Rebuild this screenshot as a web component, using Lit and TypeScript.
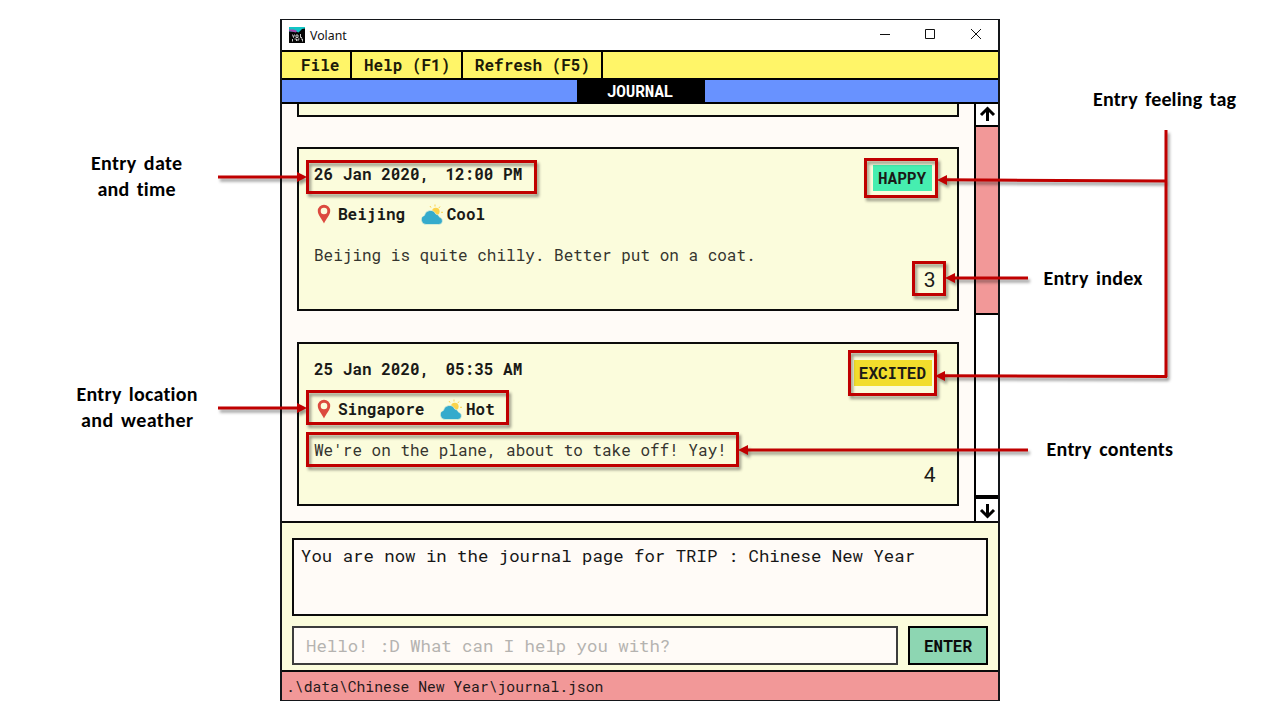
import { LitElement, html, svg, css } from "lit";
import { customElement, property } from "lit/decorators.js";

interface Entry {
  date: string;
  time: string;
  place: string;
  weather: string;
  text: string;
  feeling: string;
  index: number;
}

const ENTRIES: Entry[] = [
  { date: "26 Jan 2020,  ", time: "12:00 PM", place: "Beijing", weather: "Cool", text: "Beijing is quite chilly. Better put on a coat.", feeling: "HAPPY", index: 3 },
  { date: "25 Jan 2020,  ", time: "05:35 AM", place: "Singapore", weather: "Hot", text: "We're on the plane, about to take off! Yay!", feeling: "EXCITED", index: 4 },
];

@customElement("journal-card")
export class JournalCard extends LitElement {
  @property({ attribute: false }) entry!: Entry;

  static styles = css`
    :host { display: flex; justify-content: space-between; box-sizing: border-box; height: 164px; border: 2px solid #0b0b0b; background: #fbfcdc; padding: 13px 26px 14px 15px; color: #1a1a17; font-size: 16px; line-height: 24px; }
    .date { font-weight: 700; white-space: pre; }
    .time { margin-left: -3px; }
    .meta { display: flex; align-items: center; margin-top: 16px; font-weight: 700; }
    .pin { width: 20px; height: 22px; margin-right: 4px; }
    .cloud { width: 22px; height: 22px; margin: 0 4px 0 15.500px; }
    .text { margin-top: 17px; color: #35352f; }
    .side { display: flex; flex-direction: column; justify-content: space-between; align-items: flex-end; }
    .tag { height: 26px; line-height: 26px; margin: 3px -1px 0 0; padding: 0 6px 0 5px; font-weight: 700; }
    .HAPPY { background: #46eeb0; }
    .EXCITED { background: #f2dd2c; }
    .index { font: 21px/24px Roboto, sans-serif; margin-right: -4.500px; margin-bottom: 3px; }
  `;

  render() {
    const e = this.entry;
    return html`
      <div>
        <div class="date">${e.date}<span class="time">${e.time}</span></div>
        <div class="meta">
          <svg class="pin" viewBox="0 0 20 22"><path fill="#dc4a3f" fill-rule="evenodd" d="M10 1.700a6.200 6.200 0 0 0-6.200 6.200c0 4.300 4.100 7.600 6.200 12.700 2.100-5.100 6.200-8.400 6.200-12.700A6.200 6.200 0 0 0 10 1.700zM10 4.700a3.300 3.300 0 1 1 0 6.600 3.300 3.300 0 0 1 0-6.600z"/></svg>
          <span>${e.place}</span>
          <svg class="cloud" viewBox="0 0 22 22">
            <circle cx="14.800" cy="8.500" r="3.800" fill="#fbd34c"/>
            <path d="M14 1.500v2M9 3l1 1.600M19 3.500l-1.200 1.600M20 9.300h2" stroke="#fbd34c" stroke-width="1"/>
            <path fill="#35abcc" stroke="#fbfcdc" stroke-width=".6" d="M5 21.500a4.700 4.700 0 0 1-1.600-9.100 6 6 0 0 1 11.400-1.300 4.600 4.600 0 0 1 3.800 3.100 3.700 3.700 0 0 1-.8 7.300z"/>
          </svg>
          <span>${e.weather}</span>
        </div>
        <div class="text">${e.text}</div>
      </div>
      <div class="side">
        <div class="tag ${e.feeling}">${e.feeling}</div>
        <div class="index">${e.index}</div>
      </div>`;
  }
}

const BOXES = [
  [306, 160, 231, 34], [864, 158, 74, 40], [912, 261, 34, 35],
  [306, 390, 203, 35], [306, 432, 433, 35], [848, 350, 89, 46],
];

const LINES = [
  "M218 177H300", "M218 408H300", "M1166 130V377", "M1167 376.500L943 375.700",
  "M1166 181L945 179.800", "M1028 278H953", "M1028 450H746",
];

const HEADS = [
  "M307 177l-10-5v10z", "M307 408l-10-5v10z", "M937 180l10-5v10z",
  "M935 376l10-5v10z", "M945 278l10-5v10z", "M738 450l10-5v10z",
];

const LABELS: [string, number, number, number][] = [
  ["Entry date", 91, 170, 91], ["and time", 97.500, 196, 78],
  ["Entry location", 76.500, 401, 121], ["and weather", 81, 427, 112],
  ["Entry feeling tag", 1093, 106, 143], ["Entry index", 1043.500, 285, 99],
  ["Entry contents", 1046.500, 456, 126.500],
];

@customElement("callout-layer")
export class CalloutLayer extends LitElement {
  static styles = css`
    :host { display: block; }
    svg { display: block; }
    .marks { fill: none; stroke: #c00000; stroke-width: 3; filter: drop-shadow(2px 3px 1.500px rgba(0, 0, 0, 0.400)); }
    .heads { fill: #c00000; stroke: none; }
    .label { font: 700 20px Calibri, Carlito, Lato, sans-serif; font-variant-ligatures: none; word-spacing: 2.500px; fill: #000; }
  `;

  render() {
    return html`<svg width="1280" height="720" viewBox="0 0 1280 720">
      <g class="marks">
        ${BOXES.map(([x, y, w, h]) => svg`<rect x=${x + 1.5} y=${y + 1.5} width=${w - 3} height=${h - 3} />`)}
        ${LINES.map((d) => svg`<path d=${d} />`)}
        <g class="heads">${HEADS.map((d) => svg`<path d=${d} />`)}</g>
      </g>
      ${LABELS.map(([t, x, y, w]) => svg`<text class="label" x=${x} y=${y} textLength=${w}>${t}</text>`)}
    </svg>`;
  }
}

@customElement("app-root")
export class AppRoot extends LitElement {
  static styles = css`
    :host { display: flex; justify-content: center; position: relative; box-sizing: border-box; width: 1280px; height: 720px; padding-top: 19px; background: #fff; overflow: hidden; font-family: "Roboto Mono", "DejaVu Sans Mono", monospace; }
    .window { display: flex; flex-direction: column; box-sizing: border-box; width: 720px; height: 682px; border: 2px solid #14161a; border-width: 1px 2px; }
    .title { display: flex; align-items: center; flex-shrink: 0; height: 30px; padding-left: 7px; font: 12.300px "Noto Sans", sans-serif; color: #111; }
    .logo { width: 16px; height: 16px; margin-right: 5px; }
    .controls { margin-left: auto; width: 124px; height: 30px; }
    .menu { display: flex; flex-shrink: 0; height: 26px; border-top: 2px solid #000; border-bottom: 2px solid #000; background: #fff568; font-weight: 700; font-size: 16px; line-height: 26px; color: #1c1b08; }
    .item { border-right: 2px solid #000; padding: 0 11px; }
    .item:first-child { padding-left: 19px; }
    .item:nth-child(2) { padding: 0 10.500px 0 11.500px; }
    .item:last-child { padding-left: 12px; }
    .tabs { display: flex; justify-content: center; flex-shrink: 0; height: 22px; border-bottom: 2px solid #000; background: #6892ff; }
    .tab { box-sizing: border-box; width: 128px; margin-left: 1px; padding-right: 1px; background: #000; color: #fff; font-weight: 700; font-size: 16px; letter-spacing: -0.100px; line-height: 22px; text-align: center; }
    .body { display: flex; flex-shrink: 0; height: 417px; background: #fffbf7; border-bottom: 2px solid #0b0b0b; }
    .list { flex: 1; padding: 0 15px; }
    .previous { height: 11px; background: #fbfcdc; border: 2px solid #0b0b0b; border-top: 0; margin-bottom: 30px; }
    journal-card + journal-card { margin-top: 31px; }
    .scroll { display: flex; flex-direction: column; width: 22px; border-left: 2px solid #000; background: #fff; }
    .up { height: 21px; border-bottom: 2px solid #000; }
    .thumb { height: 186px; border-bottom: 2px solid #000; background: #f29898; }
    .down { height: 22px; margin-top: auto; border-top: 4px solid #000; }
    .arrow { display: block; width: 22px; height: 22px; fill: none; stroke: #000; stroke-width: 3; }
    .console { display: flex; flex-direction: column; flex-shrink: 0; gap: 10px; box-sizing: border-box; height: 147px; padding: 15px 10px 5px; background: #fbfcdc; font-size: 17.350px; }
    .result { box-sizing: border-box; height: 78px; border: 2px solid #0b0b0b; background: #fffbf7; padding: 3px 7px; line-height: 25px; color: #161616; white-space: pre; }
    .command { display: flex; gap: 10px; height: 39px; }
    .input { flex: 1; box-sizing: border-box; border: 2px solid #3c3c3c; background: #fffbf7; padding-left: 12px; line-height: 36px; color: #b5b3b0; }
    .enter { box-sizing: border-box; width: 80px; border: 2px solid #000; background: #8dd6b2; text-align: center; font-size: 16px; font-weight: 700; line-height: 36px; color: #0b0b0b; }
    .status { flex: 1; min-height: 0; border-top: 2px solid #0b0b0b; background: #f29898; padding-left: 4px; font-size: 14.690px; line-height: 30px; color: #24191a; }
    .callouts { position: absolute; left: 0; top: 0; }
  `;

  render() {
    return html`
      <div class="window">
        <div class="title">
          <svg class="logo" viewBox="0 0 16 16">
            <path fill="#050505" d="M0 0h16v16H0z"/>
            <path fill="#12c5c5" d="M0 0h16v1.500l-3 .5-3.500 3.500L7 4.500H0z"/>
            <path fill="#a847ac" d="M0 2.500h5l3 1.500-1 1.500L0 4z"/>
            <path fill="none" stroke="#c8c8c8" stroke-width="1" d="M3.500 7.500l1 3 1-3M7 8h2v2.500H7zM11.500 7v3.500h1.500M3.500 12v2.500M5.500 12h2v2M9 14v-2h1.500M12 12h1.500v2.500"/>
          </svg>
          Volant
          <svg class="controls" viewBox="0 0 124 30"><path fill="none" stroke="#111" d="M6 14.500h10M51.500 9.500h9v9h-9zM97 9l10 10M107 9l-10 10"/></svg>
        </div>
        <div class="menu"><div class="item">File</div><div class="item">Help (F1)</div><div class="item">Refresh (F5)</div></div>
        <div class="tabs"><div class="tab">JOURNAL</div></div>
        <div class="body">
          <div class="list">
            <div class="previous"></div>
            ${ENTRIES.map((e) => html`<journal-card .entry=${e}></journal-card>`)}
          </div>
          <div class="scroll">
            <div class="up"><svg class="arrow" viewBox="0 0 22 22"><path d="M11.500 17V5.500M5 11L11.500 4.500l6.500 6.500"/></svg></div>
            <div class="thumb"></div>
            <div class="down"><svg class="arrow" viewBox="0 0 22 22"><path d="M11.500 5V16.500M5 11L11.500 17.500l6.500-6.500"/></svg></div>
          </div>
        </div>
        <div class="console">
          <div class="result">You are now in the journal page for TRIP : Chinese New Year</div>
          <div class="command"><div class="input">Hello! :D What can I help you with?</div><div class="enter">ENTER</div></div>
        </div>
        <div class="status">.\\data\\Chinese New Year\\journal.json</div>
      </div>
      <callout-layer class="callouts"></callout-layer>`;
  }
}
